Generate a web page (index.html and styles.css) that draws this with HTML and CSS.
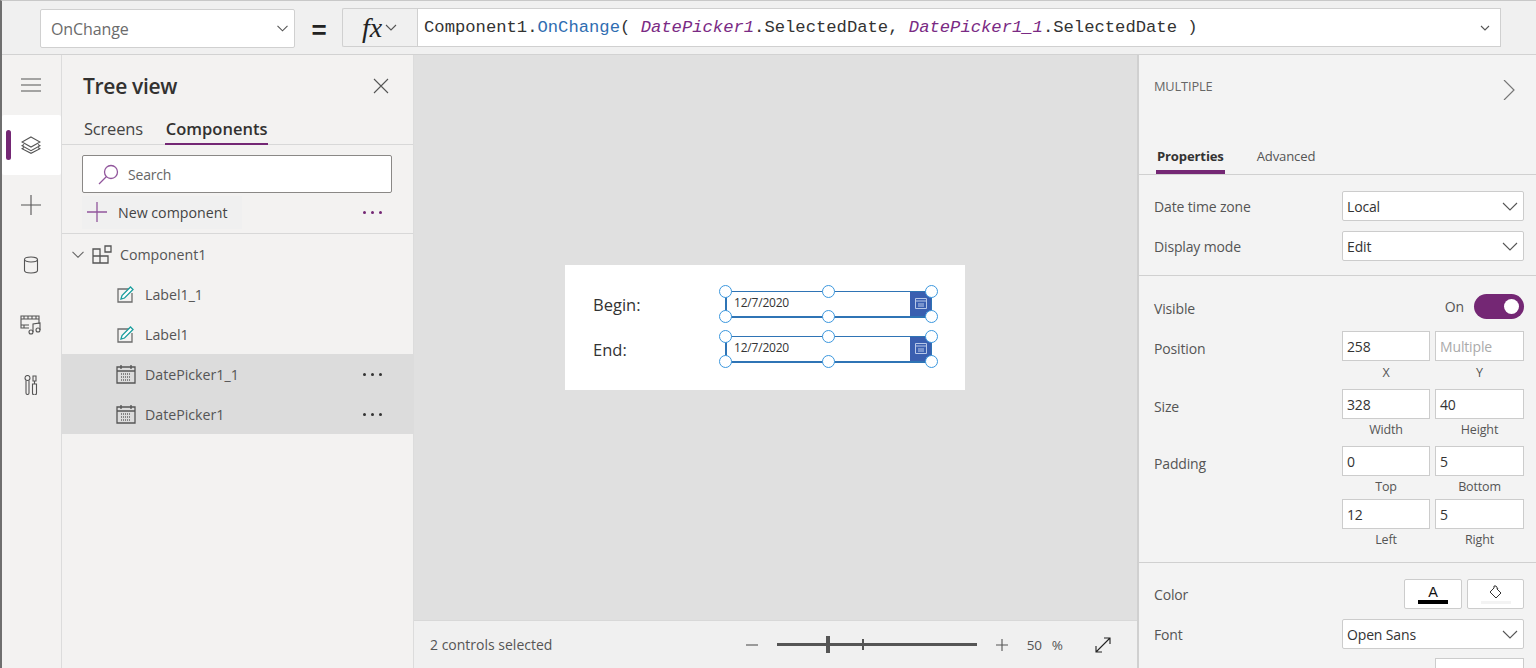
FILE: index.html
```html
<!DOCTYPE html>
<html lang="en">
<head>
<meta charset="utf-8">
<title>Tree view</title>
<link rel="stylesheet" href="styles.css">
</head>
<body>
<div class="app">
  <header class="topbar">
    <div class="prop-select">
      <span>OnChange</span>
      <svg class="chev" width="11" height="7" viewBox="0 0 11 7"><path d="M.5.800l5 5 5-5"/></svg>
    </div>
    <div class="equals">=</div>
    <div class="fx-btn">
      <span class="fx">fx</span>
      <svg class="chev" width="12" height="7" viewBox="0 0 12 7"><path d="M1 1l5 5 5-5"/></svg>
    </div>
    <div class="formula">
      <code>Component1.<span class="fn">OnChange</span>( <i class="ctl">DatePicker1</i>.SelectedDate, <i class="ctl">DatePicker1_1</i>.SelectedDate )</code>
      <svg class="chev" width="10" height="6" viewBox="0 0 10 6"><path d="M1 1l4 4 4-4"/></svg>
    </div>
  </header>

  <div class="main">
    <nav class="rail">
      <div class="rail-item">
        <svg width="20" height="14" viewBox="0 0 20 14" class="ico"><path d="M0 1h20M0 7h20M0 13h20"/></svg>
      </div>
      <div class="rail-item active">
        <span class="rail-mark"></span>
        <svg width="20" height="18" viewBox="0 0 20 18" class="ico"><path d="M10 1l9 5-9 5-9-5z"/><path d="M3 8.500l-2 1.200 9 5 9-5-2-1.200"/><path d="M3 11.500l-2 1.200 9 4.600 9-4.600-2-1.200"/></svg>
      </div>
      <div class="rail-item">
        <svg width="20" height="20" viewBox="0 0 20 20" class="ico"><path d="M10 0v20M0 10h20"/></svg>
      </div>
      <div class="rail-item">
        <svg width="16" height="18" viewBox="0 0 16 18" class="ico"><ellipse cx="8" cy="3.500" rx="6.500" ry="2.500"/><path d="M1.500 3.500v11c0 1.500 3 2.500 6.500 2.500s6.500-1 6.500-2.500v-11"/></svg>
      </div>
      <div class="rail-item">
        <svg width="22" height="20" viewBox="0 0 22 20" class="ico"><path d="M9 13H1V1h18v8"/><path d="M1 4h18M4 1v3M8 1v3M12 1v3M16 1v3M1 10h8M4 10v3"/><circle cx="11" cy="17" r="2"/><circle cx="18" cy="15" r="2"/><path d="M13 17V9l7-1v7"/></svg>
      </div>
      <div class="rail-item">
        <svg width="14" height="20" viewBox="0 0 14 20" class="ico"><circle cx="3.500" cy="3" r="2.500"/><path d="M2 5.500V18a1.500 1.500 0 0 0 3 0V5.500"/><path d="M9 1h3v5h-3zM10.500 6v3M8.500 9h4v9a2 2 0 0 1-4 0z"/></svg>
      </div>
    </nav>

    <aside class="tree">
      <div class="tree-head">
        <h1>Tree view</h1>
        <svg width="16" height="16" viewBox="0 0 16 16" class="ico"><path d="M1 1l14 14M15 1L1 15"/></svg>
      </div>
      <div class="tree-tabs">
        <span class="tree-tab">Screens</span>
        <span class="tree-tab on">Components</span>
      </div>
      <div class="search">
        <svg width="21" height="21" viewBox="0 0 21 21" class="ico purple"><circle cx="13" cy="8" r="6.500"/><path d="M8.500 12.500L1 20"/></svg>
        <span>Search</span>
      </div>
      <div class="new-row">
        <div class="new-btn">
          <svg width="20" height="20" viewBox="0 0 20 20" class="ico purple"><path d="M10 0v20M0 10h20"/></svg>
          <span>New component</span>
        </div>
        <span class="dots purple-dots"><b></b><b></b><b></b></span>
      </div>
      <ul class="items">
        <li class="item top">
          <svg class="twist" width="12" height="7" viewBox="0 0 12 7"><path d="M.5.800l5.500 5.500 5.500-5.500"/></svg>
          <svg width="20" height="19" viewBox="0 0 20 19" class="ico comp"><path d="M1 4h7v7H1zM1 11h7v7H1zM8 11h8v7H8zM13 1h6v6h-6z"/></svg>
          <span>Component1</span>
        </li>
        <li class="item child">
          <svg width="18" height="18" viewBox="0 0 18 18" class="label-ico"><path class="box" d="M13 4H1v13h14V8"/><path class="pen" d="M4 14l1-3.500L13.500 2l2.500 2.500-8.500 8.500z"/></svg>
          <span>Label1_1</span>
        </li>
        <li class="item child">
          <svg width="18" height="18" viewBox="0 0 18 18" class="label-ico"><path class="box" d="M13 4H1v13h14V8"/><path class="pen" d="M4 14l1-3.500L13.500 2l2.500 2.500-8.500 8.500z"/></svg>
          <span>Label1</span>
        </li>
        <li class="item child sel">
          <svg width="20" height="20" viewBox="0 0 20 20" class="ico cal"><path d="M1 3h18v16H1zM1 7h18M5 1v4M15 1v4"/><path class="cal-dots" d="M5 10h10M5 13h10M5 16h10"/></svg>
          <span>DatePicker1_1</span>
          <span class="dots"><b></b><b></b><b></b></span>
        </li>
        <li class="item child sel">
          <svg width="20" height="20" viewBox="0 0 20 20" class="ico cal"><path d="M1 3h18v16H1zM1 7h18M5 1v4M15 1v4"/><path class="cal-dots" d="M5 10h10M5 13h10M5 16h10"/></svg>
          <span>DatePicker1</span>
          <span class="dots"><b></b><b></b><b></b></span>
        </li>
      </ul>
    </aside>

    <section class="center">
      <div class="canvas">
        <div class="card">
          <div class="card-row">
            <span class="card-label">Begin:</span>
            <div class="picker">
              <span class="date">12/7/2020</span>
              <span class="cal-btn"><svg width="12" height="11" viewBox="0 0 12 11"><path d="M.5.500h11v10H.5zM.5 3h11M3 6h6M3 8h6"/></svg></span>
              <i class="h tl"></i><i class="h tc"></i><i class="h tr"></i><i class="h bl"></i><i class="h bc"></i><i class="h br"></i>
            </div>
          </div>
          <div class="card-row">
            <span class="card-label">End:</span>
            <div class="picker">
              <span class="date">12/7/2020</span>
              <span class="cal-btn"><svg width="12" height="11" viewBox="0 0 12 11"><path d="M.5.500h11v10H.5zM.5 3h11M3 6h6M3 8h6"/></svg></span>
              <i class="h tl"></i><i class="h tc"></i><i class="h tr"></i><i class="h bl"></i><i class="h bc"></i><i class="h br"></i>
            </div>
          </div>
        </div>
      </div>
      <footer class="status">
        <span class="status-text">2 controls selected</span>
        <div class="zoom">
          <svg width="12" height="2" viewBox="0 0 12 2" class="ico"><path d="M0 1h12"/></svg>
          <div class="slider"><span class="thumb"></span><span class="tick"></span></div>
          <svg width="12" height="12" viewBox="0 0 12 12" class="ico plus"><path d="M6 0v12M0 6h12"/></svg>
          <span class="pct">50</span>
          <span class="pct-sign">%</span>
          <svg width="18" height="18" viewBox="0 0 18 18" class="ico expand"><path d="M2 16L16 2M10 2h6v6M2 10v6h6"/></svg>
        </div>
      </footer>
    </section>

    <aside class="props">
      <div class="props-head">
        <div class="props-title">
          <span>MULTIPLE</span>
          <svg width="12" height="20" viewBox="0 0 12 20" class="ico"><path d="M1 0l10 10L1 20"/></svg>
        </div>
        <div class="props-tabs">
          <span class="props-tab on">Properties</span>
          <span class="props-tab">Advanced</span>
        </div>
      </div>
      <div class="group g1">
        <div class="row r-sel">
          <label>Date time zone</label>
          <div class="select"><span>Local</span><svg width="16" height="9" viewBox="0 0 16 9" class="chev"><path d="M1 1l7 7 7-7"/></svg></div>
        </div>
        <div class="row r-sel">
          <label>Display mode</label>
          <div class="select"><span>Edit</span><svg width="16" height="9" viewBox="0 0 16 9" class="chev"><path d="M1 1l7 7 7-7"/></svg></div>
        </div>
      </div>
      <div class="group g2">
        <div class="row r-vis">
          <label>Visible</label>
          <div class="toggle-wrap"><span>On</span><span class="toggle"><b></b></span></div>
        </div>
        <div class="row r-pair r-pos">
          <label>Position</label>
          <div class="pair">
            <div class="field"><div class="input">258</div><small>X</small></div>
            <div class="field"><div class="input ph">Multiple</div><small>Y</small></div>
          </div>
        </div>
        <div class="row r-pair r-size">
          <label>Size</label>
          <div class="pair">
            <div class="field"><div class="input">328</div><small>Width</small></div>
            <div class="field"><div class="input">40</div><small>Height</small></div>
          </div>
        </div>
        <div class="row r-pair r-pad">
          <label>Padding</label>
          <div class="pair">
            <div class="field"><div class="input">0</div><small>Top</small></div>
            <div class="field"><div class="input">5</div><small>Bottom</small></div>
            <div class="field"><div class="input">12</div><small>Left</small></div>
            <div class="field"><div class="input">5</div><small>Right</small></div>
          </div>
        </div>
      </div>
      <div class="group g3">
        <div class="row r-color">
          <label>Color</label>
          <div class="swatches">
            <div class="swatch"><span class="a">A</span><span class="bar black"></span></div>
            <div class="swatch">
              <svg width="14" height="14" viewBox="0 0 14 14" class="bucket"><path d="M6 2l6 6-5 5-6-6z"/><path d="M5 3V1h2l2 3"/></svg>
              <span class="bar white"></span>
            </div>
          </div>
        </div>
        <div class="row r-sel r-font">
          <label>Font</label>
          <div class="select"><span>Open Sans</span><svg width="16" height="9" viewBox="0 0 16 9" class="chev"><path d="M1 1l7 7 7-7"/></svg></div>
        </div>
        <div class="row r-last"><div class="input stub"></div></div>
      </div>
    </aside>
  </div>
</div>
</body>
</html>
```

FILE: styles.css
```css
* { box-sizing: border-box; }
html, body { margin: 0; height: 100%; overflow: hidden; }
body { font-family: "Open Sans", "Noto Sans", sans-serif; color: #333; background: #f0f0f0; }
ul { list-style: none; margin: 0; padding: 0; }
h1 { margin: 0; font-size: 21px; font-weight: 600; color: #323130; letter-spacing: -.3px; }

.app { height: 668px; display: flex; flex-direction: column; border-left: 2px solid #6f6f6f; border-top: 1px solid #c8c8c8; }
.ico { fill: none; stroke: #555; stroke-width: 1.100; display: block; flex: none; }
.ico.purple { stroke: #91569c; stroke-width: 1.300; }
.ico.comp { stroke-width: 1.300; }
.chev { fill: none; stroke: #555; stroke-width: 1.100; flex: none; }

/* Top formula bar */
.topbar { height: 54px; flex: none; display: flex; align-items: center; background: #f0f0f0; border-bottom: 1px solid #d2d2d2; padding-left: 38px; }
.prop-select { width: 255px; height: 39px; margin-top: 1px; display: flex; align-items: center; justify-content: space-between; padding: 1px 6px 0 10px; background: #fff; border: 1px solid #d0d0d0; border-radius: 2px; font-size: 16px; color: #6b6b6b; letter-spacing: -.1px; }
.equals { width: 47px; text-align: center; padding: 4px 0 0 1px; font-family: "Liberation Sans", sans-serif; font-size: 26px; font-weight: 700; color: #222; line-height: 1; }
.fx-btn { width: 75px; height: 39px; display: flex; align-items: center; padding-left: 19px; gap: 3px; border: 1px solid #d0d0d0; border-right: 0; border-radius: 2px 0 0 2px; }
.fx { font-family: "Liberation Serif", serif; font-style: italic; font-size: 28px; color: #222; line-height: 1; }
.formula { width: 1084px; height: 39px; display: flex; align-items: center; justify-content: space-between; padding: 0 10px 0 6px; background: #fff; border: 1px solid #d0d0d0; }
.formula code { font-family: "Liberation Mono", monospace; font-size: 17.190px; color: #333; white-space: pre; }
.fn { color: #2f6db1; }
.ctl { color: #7a2a84; }

.main { flex: 1; display: flex; min-height: 0; }

/* Left rail */
.rail { width: 60px; flex: none; background: #f3f2f1; border-right: 1px solid #dcdcdc; }
.rail-item { height: 60px; display: flex; align-items: center; justify-content: center; position: relative; }
.rail-item .ico { margin-left: -2px; }
.rail-item.active { background: #fff; border-radius: 2px; }
.rail-mark { position: absolute; left: 4px; top: 15px; width: 5px; height: 30px; background: #742774; border-radius: 3px; }

/* Tree panel */
.tree { width: 352px; flex: none; background: #f3f2f1; border-right: 1px solid #dcdcdc; display: flex; flex-direction: column; }
.tree-head { height: 60px; display: flex; align-items: center; justify-content: space-between; padding: 2px 24px 0 21px; }
.tree-tabs { height: 30px; display: flex; gap: 22px; padding-left: 22px; border-bottom: 1px solid #d8d8d8; }
.tree-tab { font-size: 16.500px; line-height: 28px; height: 30px; color: #444; letter-spacing: -.2px; }
.tree-tab.on { font-weight: 600; color: #323130; border-bottom: 2px solid #742774; padding: 0 1px; letter-spacing: 0; }
.search { margin: 10px 21px 0 20px; height: 38px; display: flex; align-items: center; gap: 9px; padding-left: 15px; background: #fff; border: 1px solid #8a8886; border-radius: 2px; font-size: 14px; color: #666; letter-spacing: -.2px; }
.new-row { height: 41px; flex: none; display: flex; align-items: center; justify-content: space-between; padding: 0 31px 2px 20px; border-bottom: 1px solid #d8d8d8; }
.new-btn { width: 160px; height: 33px; display: flex; align-items: center; gap: 11px; padding-left: 5px; background: #f0f0f0; font-size: 14.200px; color: #444; }
.item { height: 40px; display: flex; align-items: center; font-size: 14.200px; color: #555; padding-right: 31px; }
.item.top { padding-left: 10px; }
.item.top .twist { margin-right: 8px; fill: none; stroke: #666; stroke-width: 1.100; }
.item.top span { margin-left: 8px; }
.item.child { padding-left: 54px; }
.item.child > span:first-of-type { margin-left: 9px; }
.item.child .label-ico { margin-left: 1px; }
.item.child .label-ico + span { margin-left: 10px; }
.item.sel { background: #dcdcdc; }
.item .dots { margin-left: auto; }
.label-ico { flex: none; fill: none; }
.label-ico .box { stroke: #6d6d6d; stroke-width: 1.300; }
.label-ico .pen { stroke: #1a9e9e; stroke-width: 1.300; fill: #fff; }
.cal { stroke: #555; stroke-width: 1.300; }
.cal .cal-dots { stroke-dasharray: 1 1; stroke: #666; }
.dots { display: inline-flex; gap: 5px; }
.dots b { width: 3px; height: 3px; border-radius: 50%; background: #333; }
.purple-dots b { background: #742774; }

/* Canvas */
.center { flex: 1; display: flex; flex-direction: column; min-width: 0; }
.canvas { flex: 1; background: #e0e0e0; display: flex; align-items: center; justify-content: center; padding: 0 21px 22px 0; }
.card { width: 400px; height: 125px; background: #fff; margin-top: 1px; padding: 26px 0 0 28px; display: flex; flex-direction: column; gap: 18px; flex: none; }
.card-row { height: 27px; display: flex; align-items: center; }
.card-label { width: 132px; font-size: 16.500px; color: #333; }
.picker { width: 207px; height: 27px; position: relative; display: flex; align-items: center; border: 2px solid #2f74b5; border-width: 1px 1px 2px 2px; font-size: 12px; color: #333; letter-spacing: -.2px; }
.date { padding-left: 7px; margin-top: -2px; }
.cal-btn { position: absolute; right: 0; top: 0; bottom: 0; width: 21px; background: #3a5fb0; display: flex; align-items: center; justify-content: center; }
.cal-btn svg { fill: none; stroke: #b8c8e8; stroke-width: 1; }
.h { position: absolute; width: 13px; height: 13px; border-radius: 50%; background: #fff; border: 1.700px solid #3b97de; }
.tl { left: -8px; top: -7px; }
.tc { left: 95px; top: -7px; }
.tr { right: -7px; top: -7px; }
.bl { left: -8px; bottom: -7px; }
.bc { left: 95px; bottom: -7px; }
.br { right: -7px; bottom: -7px; }

/* Status bar */
.status { height: 48px; flex: none; display: flex; align-items: center; justify-content: space-between; background: #f0f0f0; border-top: 1px solid #d8d8d8; padding: 0 25px 0 16px; font-size: 14px; color: #555; }
.zoom { display: flex; align-items: center; }
.slider { width: 200px; height: 3px; margin: 0 19px 0 19px; background: #555; position: relative; }
.thumb { position: absolute; left: 49px; top: -7px; width: 4px; height: 17px; background: #555; border: 0 solid #fff; }
.tick { position: absolute; left: 85px; top: -4px; width: 2px; height: 11px; background: #555; }
.pct { margin-left: 19px; font-size: 13.500px; letter-spacing: -.2px; }
.pct-sign { margin-left: 10px; font-size: 13.500px; }
.expand { margin-left: 31px; stroke: #222; }

/* Properties */
.props { width: 399px; flex: none; background: #f3f3f3; border-left: 2px solid #d0d0d0; display: flex; flex-direction: column; font-size: 14px; color: #555; overflow: hidden; letter-spacing: -.15px; }
.props-head { height: 120px; flex: none; border-bottom: 1px solid #d0d0d0; display: flex; flex-direction: column; justify-content: space-between; }
.props-title { display: flex; justify-content: space-between; padding: 22px 7px 0 15px; font-size: 12.800px; color: #666; }
.props-title .ico { margin-top: 3px; stroke: #777; stroke-width: 1.200; margin-right: 14px; }
.props-tabs { display: flex; gap: 32px; padding-left: 17px; }
.props-tab { font-size: 13.100px; height: 30px; line-height: 24px; color: #555; }
.props-tab.on { font-weight: 700; color: #333; border-bottom: 4px solid #742774; padding: 0 1px; }
.group { flex: none; border-bottom: 1px solid #d0d0d0; padding: 0 12px 0 15px; }
.row { display: flex; justify-content: space-between; }
.row label { line-height: 30px; padding-top: 1px; }
.g1 { padding-top: 16px; height: 101px; }
.r-sel { height: 40px; }
.select { width: 182px; height: 30px; display: flex; align-items: center; justify-content: space-between; padding: 0 5px 0 4px; background: #fff; border: 1px solid #ccc; border-radius: 2px; color: #333; }
.g2 { height: 287px; padding-top: 18px; }
.r-vis { height: 37px; align-items: flex-start; }
.r-vis label { line-height: 28px; }
.toggle-wrap { display: flex; align-items: center; gap: 10px; }
.toggle { width: 50px; height: 25px; border-radius: 13px; background: #742774; position: relative; display: block; }
.toggle b { position: absolute; right: 5px; top: 5px; width: 15px; height: 15px; border-radius: 50%; background: #fff; }
.r-pair label { line-height: 34px; }
.pair { width: 182px; display: grid; grid-template-columns: 88px 89px; column-gap: 5px; }
.field { text-align: center; }
.r-pos .field { height: 58px; }
.r-pos small { padding-top: 1px; }
.r-size .field { height: 57px; }
.r-pad .field { height: 53px; }
.input { height: 30px; background: #fff; border: 1px solid #ccc; padding: 1px 0 0 4px; line-height: 28px; color: #333; text-align: left; }
.input.ph { color: #aaa; }
small { display: block; font-size: 12.500px; line-height: 22px; color: #555; }
.g3 { border-bottom: 0; padding-top: 16px; }
.r-color { height: 40px; }
.swatches { display: flex; gap: 5px; }
.swatch { width: 58px; height: 30px; background: #fff; border: 1px solid #ccc; border-radius: 2px; position: relative; display: flex; flex-direction: column; align-items: center; }
.swatch + .swatch { width: 57px; }
.a { font-size: 14.500px; color: #111; line-height: 20px; margin-top: 2px; font-family: "Liberation Sans", sans-serif; }
.bar { position: absolute; left: 13px; bottom: 4px; width: 30px; height: 4px; }
.bar.black { background: #000; }
.bar.white { background: #f3f3f3; height: 3px; }
.bucket { margin-top: 5px; fill: #fff; stroke: #333; stroke-width: 1; }
.r-font { height: 39px; }
.r-last { justify-content: flex-end; }
.stub { width: 89px; }
```
